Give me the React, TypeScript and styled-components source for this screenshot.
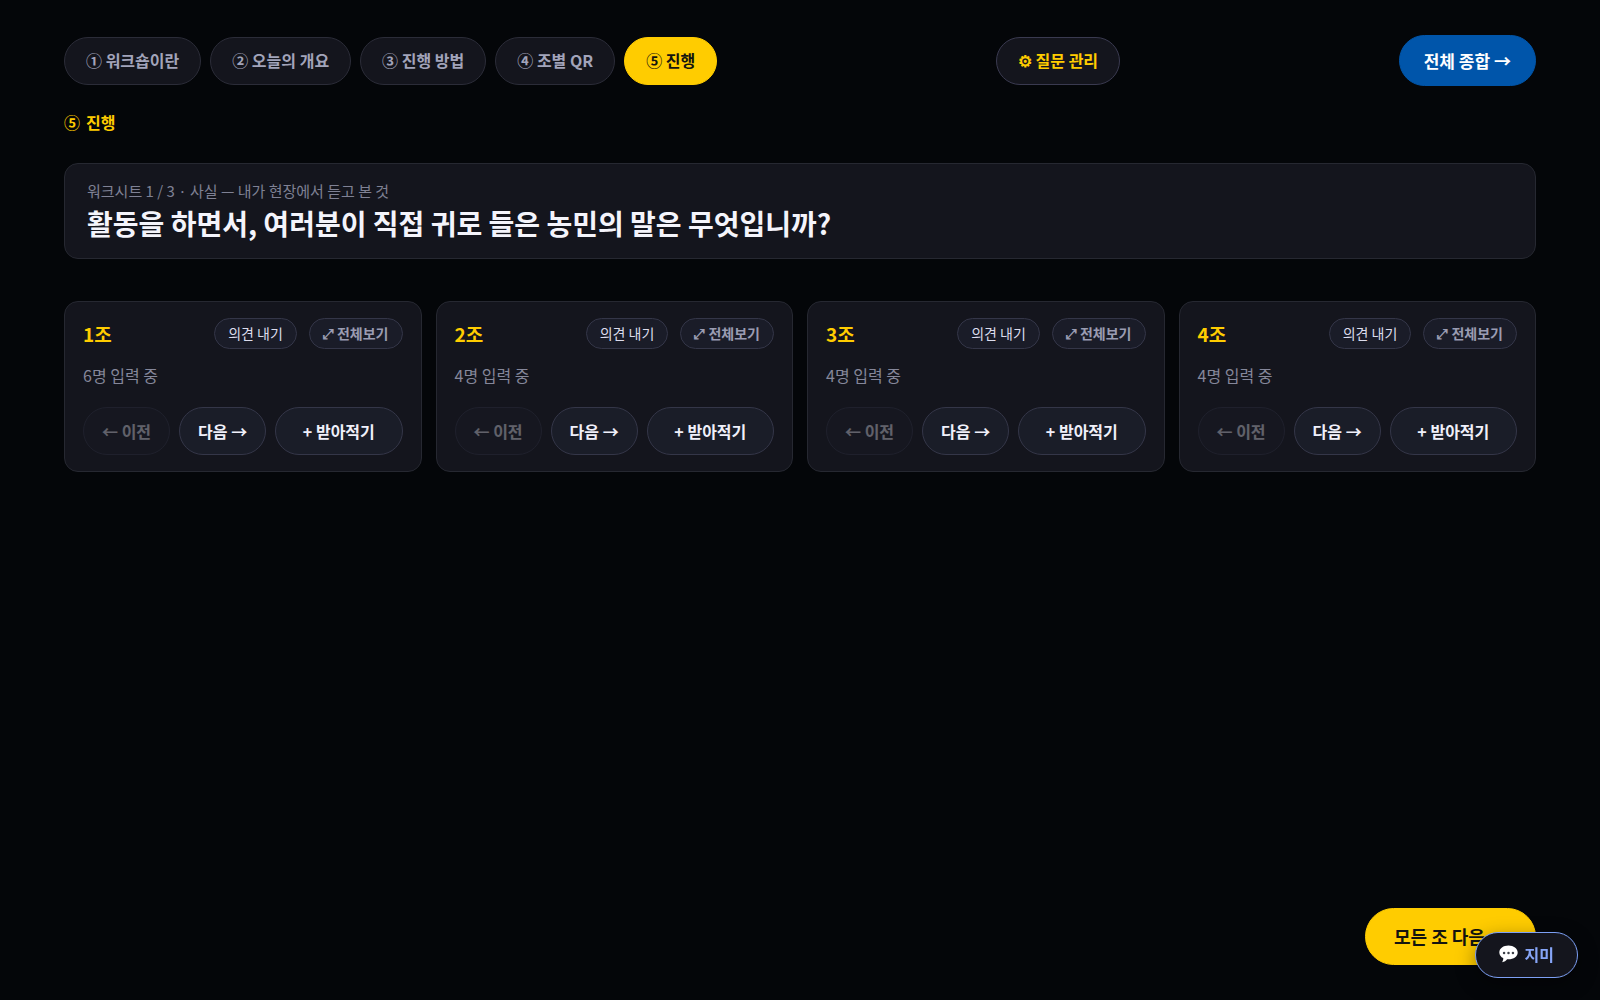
import React from "react";
import styled, { createGlobalStyle, css } from "styled-components";

const GlobalStyle = createGlobalStyle`
  * { box-sizing: border-box; }
  body {
    margin: 0;
    background: #040609;
    color: #f4f4fb;
    font-family: "Noto Sans CJK KR", "Noto Sans", sans-serif;
    font-size: 16px;
    line-height: 24px;
  }
`;

const Page = styled.div`
  display: flex;
  flex-direction: column;
  min-height: 100vh;
  padding: 35px 4vw;
`;

const Header = styled.header`
  display: flex;
  align-items: center;
  justify-content: space-between;
`;

const Steps = styled.nav`
  display: flex;
  gap: 9px;
`;

const Pill = styled.button`
  border: 1px solid #2b2c38;
  border-radius: 999px;
  padding: 11px 21px;
  background: #14151d;
  color: #a2a4ba;
  font: 700 16px/24px "Noto Sans CJK KR", sans-serif;
  white-space: nowrap;
  cursor: pointer;
`;

const Step = styled(Pill)<{ $active?: boolean }>`
  padding: 10px 21px 12px;
  ${(p) =>
    p.$active &&
    css`
      border-color: #ffcc00;
      background: #ffcc00;
      color: #14140f;
    `}
`;

const ManageButton = styled(Pill)`
  padding: 10px 21px 12px;
  border-color: #3a3a50;
  color: #ffcc00;
`;

const SummaryButton = styled(Pill)`
  padding: 12px 24px;
  border-color: #0055aa;
  background: #0055aa;
  color: #ffffff;
  font-size: 17px;
  line-height: 25px;
`;

const Eyebrow = styled.p`
  display: flex;
  gap: 6px;
  margin: 24px 0 0;
  color: #ffcc00;
  font-weight: 700;
`;

const Panel = styled.section`
  border: 1px solid #262831;
  border-radius: 14px;
  background: #14151d;
`;

const Question = styled(Panel)`
  margin-top: 29px;
  padding: 16px 22px;
`;

const QuestionMeta = styled.p`
  margin: 0;
  color: #7f8194;
  font-size: 15px;
  line-height: 22px;
`;

const QuestionTitle = styled.h1`
  margin: 2px 0 0;
  font-size: 28px;
  line-height: 38px;
  font-weight: 700;
`;

const Groups = styled.main`
  display: grid;
  grid-template-columns: repeat(4, 1fr);
  gap: 14px;
  margin-top: 42px;
`;

const GroupCard = styled(Panel)`
  padding: 16px 18px;
`;

const GroupHead = styled.div`
  display: flex;
  align-items: center;
  gap: 12px;
`;

const GroupName = styled.h2`
  flex: 1;
  margin: 0;
  color: #ffcc00;
  font-size: 19px;
  line-height: 30px;
  font-weight: 700;
`;

const SmallPill = styled(Pill)<{ $muted?: boolean }>`
  border-color: #343648;
  padding: 4px 13px;
  background: #1a1c28;
  color: ${(p) => (p.$muted ? "#9a9cb2" : "#dcdcec")};
  font-size: 14px;
  line-height: 21px;
  font-weight: ${(p) => (p.$muted ? 700 : 400)};
`;

const GroupStatus = styled.p`
  margin: 14px 0 20px;
  color: #85879a;
`;

const GroupActions = styled.div`
  display: flex;
  gap: 9px;
`;

const ActionPill = styled(Pill)<{ $grow?: boolean }>`
  flex: ${(p) => (p.$grow ? "1 1 auto" : "0 0 auto")};
  border-color: #343648;
  padding: 11px 18px;
  background: #1a1d28;
  color: #f0f0fa;
  &:disabled {
    opacity: 0.35;
    cursor: default;
  }
`;

const NextAllButton = styled(Pill)`
  position: fixed;
  right: 4vw;
  bottom: 35px;
  padding: 14px 28px;
  border-color: #ffcc00;
  background: #ffcc00;
  color: #14140f;
  font-size: 18px;
  line-height: 27px;
`;

const ChatButton = styled(Pill)`
  position: fixed;
  right: 22px;
  bottom: 22px;
  display: flex;
  align-items: center;
  gap: 7px;
  padding: 9px 23px 11px;
  border-color: #7da0f5;
  color: #86a5f7;
  box-shadow: 0 6px 20px rgba(0, 0, 0, 0.4);
`;

const steps = ["① 워크숍이란", "② 오늘의 개요", "③ 진행 방법", "④ 조별 QR", "⑤ 진행"];

const groups = [
  { name: "1조", people: 6 },
  { name: "2조", people: 4 },
  { name: "3조", people: 4 },
  { name: "4조", people: 4 },
];

function ChatIcon() {
  return (
    <svg width="19" height="18" viewBox="0 0 18 17" aria-hidden="true">
      <path
        d="M9 .5C4.2.5.3 3.2.3 7c0 2.300 1.500 4.300 3.700 5.400.2 1.300-.2 2.600-1 3.800 2.100-.3 3.700-1.300 4.700-2.800l1.300.1c4.800 0 8.700-2.800 8.700-6.500S13.800.5 9 .5Z"
        fill="#fff"
      />
      <circle cx="4.800" cy="7.500" r="1.200" fill="#3c4048" />
      <circle cx="9" cy="7.500" r="1.200" fill="#3c4048" />
      <circle cx="13.200" cy="7.500" r="1.200" fill="#3c4048" />
    </svg>
  );
}

export default function App() {
  return (
    <>
      <GlobalStyle />
      <Page>
        <Header>
          <Steps>
            {steps.map((label, i) => (
              <Step key={label} $active={i === 4}>
                {label}
              </Step>
            ))}
          </Steps>
          <ManageButton>⚙ 질문 관리</ManageButton>
          <SummaryButton>전체 종합 →</SummaryButton>
        </Header>
        <Eyebrow>
          <span>⑤</span>
          <span>진행</span>
        </Eyebrow>
        <Question>
          <QuestionMeta>워크시트 1 / 3 · 사실 — 내가 현장에서 듣고 본 것</QuestionMeta>
          <QuestionTitle>활동을 하면서, 여러분이 직접 귀로 들은 농민의 말은 무엇입니까?</QuestionTitle>
        </Question>
        <Groups>
          {groups.map((g) => (
            <GroupCard key={g.name}>
              <GroupHead>
                <GroupName>{g.name}</GroupName>
                <SmallPill>의견 내기</SmallPill>
                <SmallPill $muted>⤢ 전체보기</SmallPill>
              </GroupHead>
              <GroupStatus>{g.people}명 입력 중</GroupStatus>
              <GroupActions>
                <ActionPill disabled>← 이전</ActionPill>
                <ActionPill>다음 →</ActionPill>
                <ActionPill $grow>+ 받아적기</ActionPill>
              </GroupActions>
            </GroupCard>
          ))}
        </Groups>
      </Page>
      <NextAllButton>모든 조 다음 →</NextAllButton>
      <ChatButton>
        <ChatIcon />
        지미
      </ChatButton>
    </>
  );
}
